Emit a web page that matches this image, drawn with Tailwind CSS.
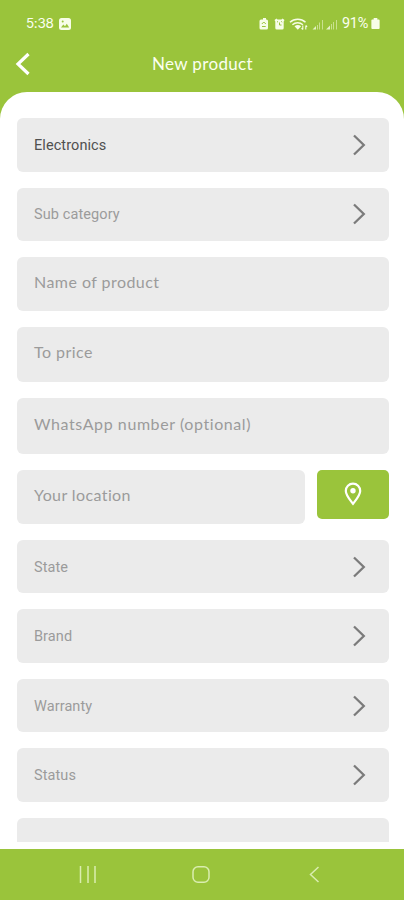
<!DOCTYPE html>
<html lang="en">
<head>
<meta charset="utf-8">
<title>New product</title>
<script src="https://cdn.jsdelivr.net/npm/@tailwindcss/browser@4"></script>
</head>
<body class="bg-white">
<svg class="hidden">
  <symbol id="next" viewBox="0 0 14 22"><path d="M2 1.500 11.800 11 2 20.500" fill="none" stroke="#7b7b7b" stroke-width="2.300"/></symbol>
</svg>
<div class="flex h-[900px] w-[404px] flex-col overflow-hidden bg-[#9ac43b] font-['Roboto',sans-serif]">
  <header class="h-[92px] shrink-0 text-[#fbfff0]">
    <div class="flex h-[38px] items-center pt-[9px] pr-[24px] pl-[26px]">
      <span class="w-[33px] font-['Inter',sans-serif] text-[13.5px] tracking-[-0.35px]">5:38</span>
      <svg class="h-[12px] w-[12px]" viewBox="0 0 12 12"><rect width="12" height="12" rx="2.5" fill="#f7fde8"/><path d="m2 9.5 2.3-3 1.700 1.700 1.800-2.400L10.200 9.500z" fill="#9ac43b"/><circle cx="3.700" cy="3.600" r="1" fill="#9ac43b"/></svg>
      <svg class="ml-auto h-[14px] w-[81px]" viewBox="0 0 81 14">
        <g fill="#f7fde8">
          <path d="M4 2.500h1V1h3v1.500h.5a1.500 1.500 0 0 1 1.500 1.500V11a1.500 1.500 0 0 1-1.500 1.500H3A1.500 1.500 0 0 1 1.500 11V4A1.500 1.500 0 0 1 3 2.500z"/>
          <path d="m16.500 3 2-1.500 1 1h4l1-1 2 1.500-.8 1.500V11a1.500 1.500 0 0 1-1.500 1.500h-5.400a1.500 1.500 0 0 1-1.500-1.500V4.500z"/>
          <path d="m54.500 12.500 3.500-3.500v3.500z M68 12.500l4-4v4z" opacity=".8"/>
        </g>
        <path d="m3.800 7 2-2 2 2M4 9.500h3.700" fill="none" stroke="#9ac43b"/>
        <path d="M19 5.200l1-.8M24.200 5.200l-1-.8M21.500 5.500v2.500h2" fill="none" stroke="#9ac43b"/>
        <g fill="none" stroke="#f7fde8" stroke-width="1.500"><path d="M32 5.200a11.500 11.500 0 0 1 15.500 0M34.400 7.700a8 8 0 0 1 10.500 0"/><path d="M44.800 8.500v4m-1.300-1.300 1.300 1.300M47.800 12.500v-4m1.300 1.300-1.300-1.300" stroke-width="1.100"/></g><path d="M36.500 9.200q3.300-2.300 6.600 0l-3.300 3.600z" fill="#f7fde8"/>
        <g stroke="#d9ebac" opacity=".75"><path d="M59.500 12.500V8M61.500 12.500V5.500M64.500 12.500V3M73.500 12.500V7M75.500 12.500V5M78.500 12.500V3"/></g>
      </svg>
      <span class="ml-[3px] w-[28px] text-[14.500px] tracking-[-0.300px] whitespace-nowrap">91%</span>
      <svg class="ml-[1px] h-[11px] w-[9px]" viewBox="0 0 9 12"><path d="M2.500 0h4v1.500H8q1 0 1 1V11q0 1-1 1H1q-1 0-1-1V2.500q0-1 1-1h1.500z" fill="#f7fde8"/></svg>
    </div>
    <div class="flex h-[51px] items-center pl-[15px]">
      <svg class="h-[24px] w-[16px]" viewBox="0 0 16 24"><path d="M13.500 2 3 12l10.500 10" fill="none" stroke="#fff" stroke-width="3.200"/></svg>
      <h1 class="ml-[121px] font-['Lato',sans-serif] text-[17px] tracking-[0.350px] whitespace-nowrap">New product</h1>
    </div>
  </header>
  <main class="h-[757px] shrink-0 rounded-t-[27px] bg-white pr-[15px] pl-[17px] pt-[26px]">
    <div class="flex h-[724px] flex-col gap-[16px] overflow-hidden text-[14.500px] text-[#9b9b9b]">
      <div class="flex h-[53.500px] shrink-0 items-center justify-between rounded-[6px] bg-[#ebebeb] pr-[23px] pl-[17px] text-[#505050]"><span class="pt-[2.500px] tracking-[0.080px]">Electronics</span><svg class="h-[22px] w-[14px]"><use href="#next"/></svg></div>
      <div class="flex h-[53.500px] shrink-0 items-center justify-between rounded-[6px] bg-[#ebebeb] pr-[23px] pl-[17px]"><span class="pt-[2px] tracking-[0.100px]">Sub category</span><svg class="h-[22px] w-[14px]"><use href="#next"/></svg></div>
      <div class="flex h-[53.500px] shrink-0 items-center rounded-[6px] bg-[#ebebeb] pb-[4px] pl-[17px] font-['Lato',sans-serif] text-[16px] tracking-[0.450px]">Name of product</div>
      <div class="flex h-[55.500px] shrink-0 items-center rounded-[6px] bg-[#ebebeb] pb-[4px] pl-[17px] font-['Lato',sans-serif] text-[16px] tracking-[0.450px]">To price</div>
      <div class="flex h-[55.500px] shrink-0 items-center rounded-[6px] bg-[#ebebeb] pb-[4px] pl-[17px] font-['Lato',sans-serif] text-[16px] tracking-[0.580px]">WhatsApp number (optional)</div>
      <div class="flex h-[54px] shrink-0 gap-[12px]">
        <div class="flex w-[288px] items-center rounded-[6px] bg-[#ebebeb] pb-[4px] pl-[17px] font-['Lato',sans-serif] text-[16px] tracking-[0.400px]">Your location</div>
        <div class="flex h-[49px] w-[72px] items-center justify-center rounded-[5px] bg-[#9ac43b]"><svg class="h-[24px] w-[18px]" viewBox="0 0 18 24"><path d="M9 21.800C5.500 17.200 1.800 13 1.800 8.900a7.200 7.200 0 0 1 14.400 0C16.200 13 12.500 17.200 9 21.800z" fill="none" stroke="#fff" stroke-width="2.200"/><circle cx="9" cy="8.800" r="2.700" fill="#fff"/></svg></div>
      </div>
      <div class="flex h-[53.500px] shrink-0 items-center justify-between rounded-[6px] bg-[#ebebeb] pt-px pr-[23px] pl-[17px]"><span class="pt-[2px] tracking-[0.080px]">State</span><svg class="h-[22px] w-[14px]"><use href="#next"/></svg></div>
      <div class="flex h-[53.500px] shrink-0 items-center justify-between rounded-[6px] bg-[#ebebeb] pt-px pr-[23px] pl-[17px]"><span class="pt-[2px] tracking-[0.080px]">Brand</span><svg class="h-[22px] w-[14px]"><use href="#next"/></svg></div>
      <div class="flex h-[53.500px] shrink-0 items-center justify-between rounded-[6px] bg-[#ebebeb] pt-px pr-[23px] pl-[17px]"><span class="pt-[2px] tracking-[0.080px]">Warranty</span><svg class="h-[22px] w-[14px]"><use href="#next"/></svg></div>
      <div class="flex h-[53.500px] shrink-0 items-center justify-between rounded-[6px] bg-[#ebebeb] pt-px pr-[23px] pl-[17px]"><span class="pt-[2px] tracking-[0.080px]">Status</span><svg class="h-[22px] w-[14px]"><use href="#next"/></svg></div>
      <div class="h-[53.500px] shrink-0 rounded-[6px] bg-[#ebebeb]"></div>
    </div>
  </main>
  <nav class="flex h-[51px] shrink-0 items-center pl-[79px]">
    <svg class="h-[17px] w-[18px]" viewBox="0 0 18 17"><path d="M1.500 0v17M9 0v17M16 0v17" stroke="#daedb0" stroke-width="1.500"/></svg>
    <svg class="ml-[95px] h-[17px] w-[18px]" viewBox="0 0 18 17"><rect x="1" y=".75" width="16" height="15.500" rx="5" fill="none" stroke="#daedb0" stroke-width="1.500"/></svg>
    <svg class="ml-[99px] h-[17px] w-[11px]" viewBox="0 0 11 17"><path d="M9.500 1 1.500 8.500l8 7.500" fill="none" stroke="#daedb0" stroke-width="1.500"/></svg>
  </nav>
</div>
</body>
</html>
